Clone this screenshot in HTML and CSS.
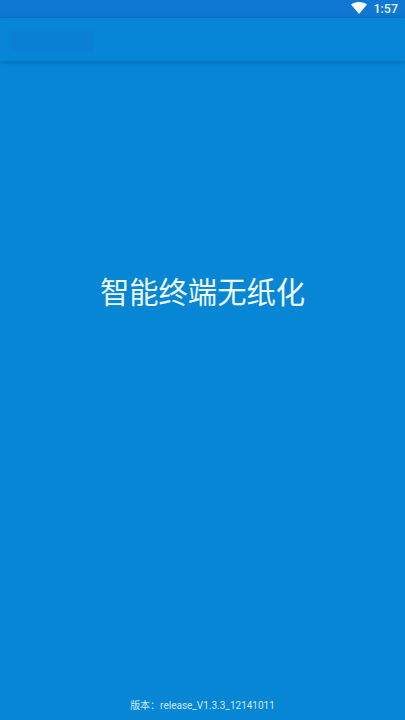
FILE: index.html
```html
<!DOCTYPE html>
<html lang="zh-CN">
<head>
<meta charset="utf-8">
<title>智能终端无纸化</title>
<link rel="stylesheet" href="styles.css">
</head>
<body>
<div class="screen">
  <header class="status-bar">
    <svg class="wifi" viewBox="0 0 16 12" width="16" height="12" aria-hidden="true"><path d="M0 2.600C2.100 .9 4.900 0 8 0s5.900 .9 8 2.600L8 12z"/></svg>
    <span class="clock">1:57</span>
  </header>
  <div class="app-bar"><div class="app-bar-title"></div></div>
  <main class="content">
    <h1 class="headline">智能终端无纸化</h1>
  </main>
  <footer class="version">版本：release_V1.3.3_12141011</footer>
</div>
</body>
</html>
```
FILE: styles.css
```css
* { box-sizing: border-box; }
html, body { margin: 0; height: 100%; }
body { background: #0786d6; overflow: hidden; }
.screen {
  width: 405px;
  height: 720px;
  display: flex;
  flex-direction: column;
  background: #0786d6;
  color: #fff;
  font-family: Roboto, "Noto Sans CJK SC", sans-serif;
}
.status-bar {
  height: 18px;
  flex: none;
  display: flex;
  align-items: center;
  justify-content: flex-end;
  gap: 6px;
  padding-right: 7px;
  background: #0f78d2;
}
.wifi { fill: #fff; display: block; margin-top: -2px; }
.clock { font-size: 12.500px; font-weight: 500; line-height: 18px; color: #e6f4fc; }
.app-bar {
  height: 43px;
  flex: none;
  padding: 14px 0 0 10px;
  background: #0785d6;
  box-shadow: 0 1px 5px rgba(5, 85, 145, .6);
  position: relative;
}
.app-bar-title { width: 83px; height: 19px; background: #0a7fd4; filter: blur(1px); }
.content {
  flex: 1;
  display: flex;
  justify-content: center;
  padding-top: 210px;
}
.headline {
  margin: 0;
  font-size: 29.300px;
  font-weight: 400;
  line-height: 38px;
  color: #eef8fd;
  font-family: "Noto Sans CJK SC", sans-serif;
  white-space: nowrap;
}
.version {
  flex: none;
  height: 27px;
  padding-top: 6px;
  text-align: center;
  font-size: 10px;
  line-height: 14px;
  color: #cfe9f8;
  white-space: nowrap;
}
```
